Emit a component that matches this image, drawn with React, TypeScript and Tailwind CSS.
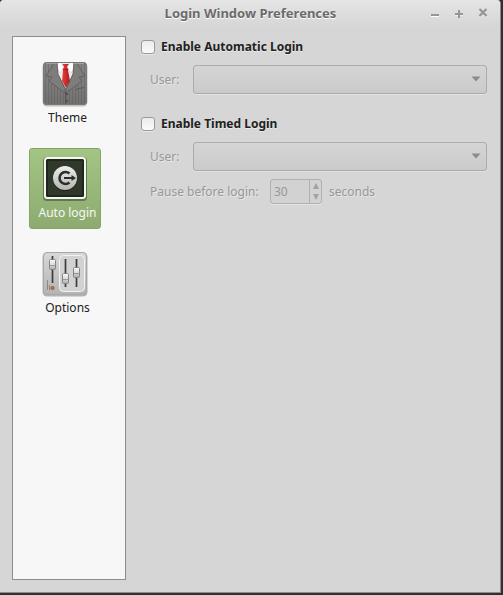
import type { ReactNode } from "react";

const etched = "[text-shadow:0_1px_0_#ffffff80]";
const dim = "text-[#989898] [text-shadow:1px_1px_0_#e6e6e6]";

function TitleBar() {
  return (
    <header className="flex h-[27px] shrink-0 items-center bg-linear-to-b from-[#e5e5e5] to-[#d6d6d6] pr-[11px] pl-[72px]">
      <h1 className="flex-1 pb-0.5 text-center text-[13px] leading-5 font-bold text-[#6b6b6b] [text-shadow:0_1px_0_#ffffff]">
        Login Window Preferences
      </h1>
      <div className="flex gap-3 pb-1 text-[#969696]">
        <button aria-label="Minimize" className="size-3">
          <svg viewBox="0 0 12 12" className="size-3">
            <path d="M2 10.500h8" stroke="#fff" strokeWidth="1" />
            <path d="M2 9h8" stroke="currentColor" strokeWidth="2" />
          </svg>
        </button>
        <button aria-label="Maximize" className="size-3">
          <svg viewBox="0 0 12 12" className="size-3">
            <path d="M2 9h8M6 5v8" stroke="#eee" strokeWidth="2" />
            <path d="M2 8h8M6 4v8" stroke="currentColor" strokeWidth="2" />
          </svg>
        </button>
        <button aria-label="Close" className="size-3">
          <svg viewBox="0 0 12 12" className="size-3">
            <path d="M2.500 4l7 7m0-7l-7 7" stroke="#eee" strokeWidth="2.200" />
            <path d="M2.500 3l7 7m0-7l-7 7" stroke="currentColor" strokeWidth="2.400" />
          </svg>
        </button>
      </div>
    </header>
  );
}

function ThemeIcon() {
  return (
    <svg viewBox="0 0 46 46" className="size-[46px]" aria-hidden="true">
      <defs>
        <linearGradient id="suit" x1="0" y1="0" x2="0" y2="1">
          <stop offset="0" stopColor="#898785" />
          <stop offset="1" stopColor="#72706e" />
        </linearGradient>
        <linearGradient id="tie" x1="0" x2="1">
          <stop offset="0" stopColor="#ee4444" />
          <stop offset="1" stopColor="#b5161b" />
        </linearGradient>
        <pattern id="stripe" width="3" height="4" patternUnits="userSpaceOnUse">
          <path d="M.5 0v4" stroke="#4a4846" strokeWidth="1" opacity=".28" />
        </pattern>
        <clipPath id="suitClip"><rect x="1" y="1" width="44" height="43" rx="4" /></clipPath>
      </defs>
      <rect x="0.500" y="1.500" width="45" height="44" rx="4.500" fill="#999" opacity=".6" />
      <g clipPath="url(#suitClip)">
        <rect width="46" height="46" fill="url(#suit)" />
        <rect width="46" height="46" fill="url(#stripe)" />
        <path d="M15 0h17l-1 13-7 15-8-15z" fill="#ededed" />
        <path d="M20 3h7l1 4-2 2 2 11-4 7-4-7 1-11-2-2z" fill="url(#tie)" />
        <path d="M16 0l-1 7 3 5 4-6-4-6zM31 0l1 7-3 5-4-6 4-6z" fill="#fff" stroke="#c4c4c4" strokeWidth=".5" />
        <path d="M21 8.500h5" stroke="#95151a" strokeWidth=".7" />
        <path d="M13 1L4 15l6 1-3 4 16 12v-4L16 13 15 1zM34 1l9 14-6 1 3 4-16 12v-4l7-15 1-12z" fill="#7f7d7b" stroke="#5d5b59" strokeWidth=".8" />
        <path d="M23.500 31v14" stroke="#575553" strokeWidth="1" />
        <path d="M33 28.500l9-2" stroke="#5d5b59" strokeWidth="1" />
        <circle cx="25" cy="33" r="1.100" fill="#4a4846" />
        <circle cx="25" cy="40" r="1.100" fill="#4a4846" />
      </g>
      <rect x="1.500" y="1.500" width="43" height="42" rx="3.500" fill="none" stroke="#7a7876" />
      <path d="M4 2.500h11M32 2.500h10" stroke="#bbb9b7" opacity=".6" />
    </svg>
  );
}

function LoginIcon() {
  return (
    <svg viewBox="0 0 46 46" className="size-[46px]" aria-hidden="true">
      <defs>
        <linearGradient id="disc" x1="0" y1="0" x2="0" y2="1">
          <stop offset="0" stopColor="#eee" />
          <stop offset="1" stopColor="#b5b5b5" />
        </linearGradient>
      </defs>
      <rect x="1" y="1" width="44" height="44" rx="4" fill="#3d5130" opacity=".6" />
      <rect x="2" y="1" width="42" height="42" rx="3.500" fill="#f4f4f4" />
      <rect x="4" y="3" width="38" height="38" rx="1.500" fill="#20261a" />
      <rect x="6" y="5" width="34" height="34" fill="#30382a" />
      <circle cx="23" cy="23" r="12" fill="#1b2016" />
      <circle cx="23" cy="22" r="12" fill="url(#disc)" />
      <path d="M27.500 17.500a6 6 0 1 0 0 9" fill="none" stroke="#293024" strokeWidth="2.600" />
      <path d="M22 22h9" stroke="#293024" strokeWidth="2" />
      <path d="M29.500 19l4.500 3-4.500 3z" fill="#293024" />
    </svg>
  );
}

function OptionsIcon() {
  return (
    <svg viewBox="0 0 46 46" className="size-[46px]" aria-hidden="true">
      <defs>
        <linearGradient id="metal" x1="0" y1="0" x2="0" y2="1">
          <stop offset="0" stopColor="#d8d8d8" />
          <stop offset="1" stopColor="#b4b4b4" />
        </linearGradient>
        <linearGradient id="knob" x1="0" y1="0" x2="0" y2="1">
          <stop offset="0" stopColor="#fafafa" />
          <stop offset=".5" stopColor="#dcdcdc" />
          <stop offset="1" stopColor="#a9a9a9" />
        </linearGradient>
      </defs>
      <rect x="0.500" y="1.500" width="45" height="44" rx="4.500" fill="#888" opacity=".6" />
      <rect x="1.500" y="1.500" width="43" height="42" rx="3.500" fill="url(#metal)" stroke="#a8a8a8" />
      <rect x="17.500" y="4.500" width="25" height="36" rx="4" fill="#d2d2d2" stroke="#f2f2f2" />
      <path d="M10.500 5v27M23.500 8v28M34.500 8v28" stroke="#3c3c3c" strokeWidth="1.700" />
      <path d="M5.500 29v10M7.500 34v5" stroke="#888" />
      <rect x="7.500" y="8.500" width="6" height="10" rx="1" fill="url(#knob)" stroke="#858585" />
      <rect x="20.500" y="22.500" width="6" height="10" rx="1" fill="url(#knob)" stroke="#858585" />
      <rect x="31.500" y="16.500" width="6" height="10" rx="1" fill="url(#knob)" stroke="#858585" />
      <path d="M8 14.500h5M21 28.500h5M32 22.500h5" stroke="#999" />
      <circle cx="10.500" cy="37" r="1.700" fill="#e2582d" stroke="#a06a55" />
    </svg>
  );
}

function NavItem({ icon, label, selected = false }: { icon: ReactNode; label: string; selected?: boolean }) {
  return (
    <button
      aria-current={selected ? "page" : undefined}
      className={
        "flex h-[81px] w-[72px] flex-col items-center gap-px rounded-[3px] border pt-[7px] text-[12px] leading-5 " +
        (selected
          ? "border-[#83a566] bg-linear-to-b from-[#a3c583] to-[#8dab70] text-[#f7f7f7]"
          : "border-transparent text-[#212121]")
      }
    >
      {icon}
      <span className="pl-[5px] whitespace-nowrap">{label}</span>
    </button>
  );
}

function CheckRow({ label }: { label: string }) {
  return (
    <label className="flex h-5 items-center gap-1.5 text-[12px] leading-5 font-bold text-[#212121]">
      <input
        type="checkbox"
        className="size-3.5 shrink-0 appearance-none rounded-[3px] border border-[#999] bg-linear-to-b from-[#ececec] to-[#fafafa] shadow-[0_1px_0_#e8e8e8] checked:bg-[#8dab70]"
      />
      {label}
    </label>
  );
}

function UserRow({ id }: { id: string }) {
  return (
    <div className="flex items-center pl-[9px] text-[12px] leading-5">
      <label htmlFor={id} className={`w-[43px] shrink-0 ${dim}`}>
        User:
      </label>
      <div className="relative min-w-0 flex-1">
        <select
          id={id}
          disabled
          className="block h-[29px] w-full appearance-none rounded-[3px] border border-[#acacac] bg-linear-to-b from-[#d5d5d5] to-[#cacaca] opacity-100 shadow-[0_1px_0_#e2e2e2]"
        />
        <svg viewBox="0 0 10 6" className="pointer-events-none absolute top-[11px] right-1.5 h-1.5 w-2.5" aria-hidden="true">
          <path d="M0.500 0.500h9L5 5.500z" fill="#8b8b8b" />
        </svg>
      </div>
    </div>
  );
}

function PauseRow() {
  return (
    <div className={`flex items-center pl-[9px] text-[12px] leading-5 ${dim}`}>
      <label htmlFor="pause" className="w-[120px] shrink-0">
        Pause before login:
      </label>
      <div className="flex h-[25px] w-[52px] overflow-hidden rounded-[3px] border border-[#b0b0b0] bg-[#d2d2d2] shadow-[0_1px_0_#e4e4e4]">
        <input id="pause" type="text" inputMode="numeric" defaultValue="30" disabled className="min-w-0 flex-1 bg-transparent pl-[3px]" />
        <div className="flex w-3 flex-col border-l border-[#b0b0b0]">
          <button disabled aria-label="Increase" className="flex flex-1 items-center justify-center">
            <svg viewBox="0 0 6 6" className="size-1.5">
              <path d="M0 6h6L3 0z" fill="#a2a2a2" />
            </svg>
          </button>
          <button disabled aria-label="Decrease" className="flex flex-1 items-center justify-center">
            <svg viewBox="0 0 6 6" className="size-1.5">
              <path d="M0 0h6L3 6z" fill="#a2a2a2" />
            </svg>
          </button>
        </div>
      </div>
      <span className="pl-[7px]">seconds</span>
    </div>
  );
}

export default function App() {
  return (
    <div className="flex min-h-screen bg-[#303030] pr-[2px] pb-[2px] font-['Noto_Sans',sans-serif]">
      <div className="flex min-w-0 flex-1 flex-col overflow-hidden rounded-t-[4px] border-r border-b border-[#8c8c8c] bg-[#d6d6d6]">
        <TitleBar />
        <div className="flex flex-1 gap-[15px] px-3 pt-[9px] pb-3">
          <nav aria-label="Preferences sections" className="flex w-[114px] shrink-0 flex-col gap-3.5 border border-[#8c8c8c] bg-[#f7f7f7] p-4">
            <NavItem icon={<ThemeIcon />} label="Theme" />
            <NavItem icon={<LoginIcon />} label="Auto login" selected />
            <NavItem icon={<OptionsIcon />} label="Options" />
          </nav>
          <main className={`flex min-w-0 flex-1 flex-col gap-5 pt-px pr-px ${etched}`}>
            <section className="flex flex-col gap-2">
              <CheckRow label="Enable Automatic Login" />
              <UserRow id="auto-user" />
            </section>
            <section className="flex flex-col gap-2">
              <CheckRow label="Enable Timed Login" />
              <UserRow id="timed-user" />
              <PauseRow />
            </section>
          </main>
        </div>
      </div>
    </div>
  );
}
